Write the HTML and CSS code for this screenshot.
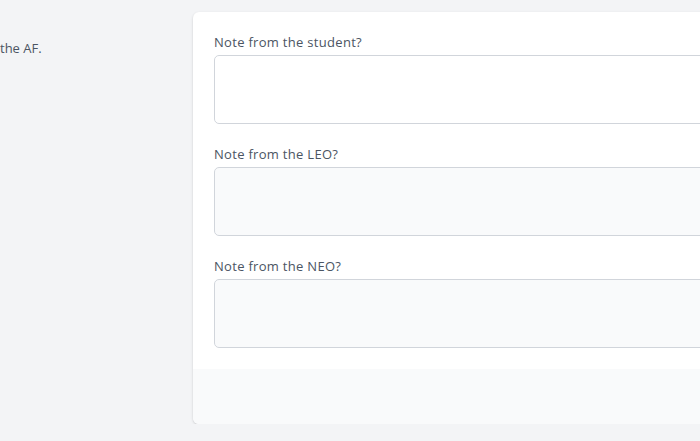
FILE: index.html
```html
<!DOCTYPE html>
<html>
<head>
<meta charset="utf-8">
<link rel="stylesheet" href="styles.css">
</head>
<body>
<div class="page">
  <div class="intro">
    <p class="intro-text">the AF.</p>
  </div>
  <div class="card">
    <div class="card-body">
      <div class="field">
        <label class="label">Note from the student?</label>
        <textarea class="input" rows="3"></textarea>
      </div>
      <div class="field">
        <label class="label">Note from the LEO?</label>
        <textarea class="input input-disabled" rows="3" disabled></textarea>
      </div>
      <div class="field">
        <label class="label">Note from the NEO?</label>
        <textarea class="input input-disabled" rows="3" disabled></textarea>
      </div>
    </div>
    <div class="card-footer"></div>
  </div>
</div>
</body>
</html>
```
FILE: styles.css
```css
html, body {
  margin: 0;
  padding: 0;
  background: #f3f4f6;
  font-family: "Open Sans", "Liberation Sans", sans-serif;
  overflow: hidden;
}
.page {
  display: grid;
  grid-template-columns: 193px 580px;
  padding-top: 12px;
  width: 773px;
}
.intro {
  padding-top: 26px;
}
.intro-text {
  margin: 0;
  font-size: 13px;
  line-height: 20px;
  color: #4b5563;
}
.card {
  background: #fff;
  border-radius: 6px;
  box-shadow: 0 1px 3px rgba(0,0,0,0.12), 0 1px 2px rgba(0,0,0,0.06);
  overflow: hidden;
}
.card-body {
  padding: 20px 21px 21px 21px;
  display: flex;
  flex-direction: column;
  gap: 20px;
}
.field {
  display: flex;
  flex-direction: column;
  gap: 3px;
}
.label {
  font-size: 13px;
  line-height: 20px;
  letter-spacing: 0.3px;
  color: #4b5563;
}
.input {
  display: block;
  box-sizing: border-box;
  height: 69px;
  width: 100%;
  margin: 0;
  border: 1px solid #d1d5db;
  border-radius: 5px;
  background: #fff;
  resize: none;
}
.input-disabled {
  background: #f9fafb;
}
.card-footer {
  height: 55px;
  background: #f9fafb;
}
```
